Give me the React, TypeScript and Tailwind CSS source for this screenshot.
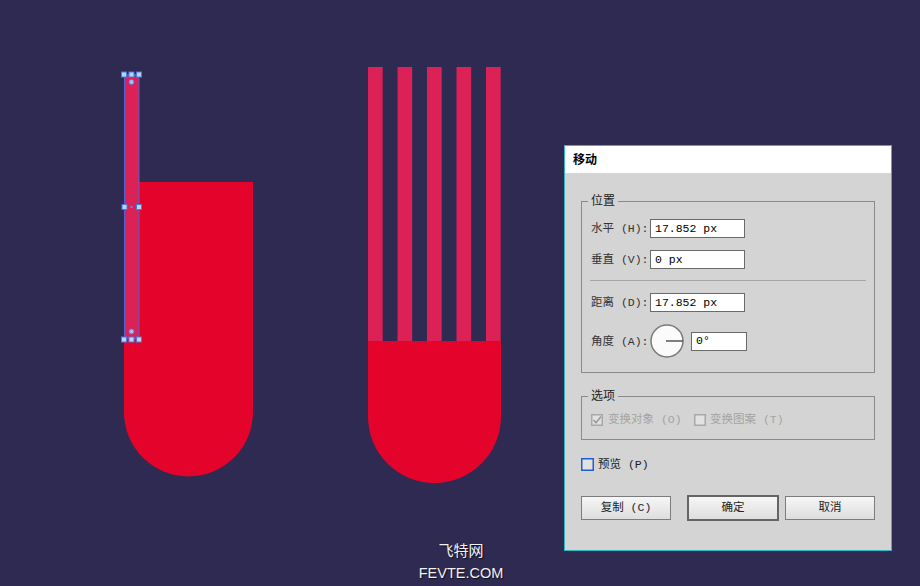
import React from "react";

const uiFont = {
  fontFamily: '"Liberation Serif", "Noto Sans CJK SC", serif',
};
const labelFont = {
  fontFamily: '"Liberation Mono", "Noto Sans CJK SC", monospace',
};
const monoFont = {
  fontFamily: '"Liberation Mono", "Noto Sans CJK SC", monospace',
};

const Artwork = () => {
  const stripes = [368, 397.5, 427, 456.5, 486];
  const handlesX = [124, 131.5, 139];
  return (
    <svg
      className="absolute top-0 left-0"
      width={920}
      height={586}
      viewBox="0 0 920 586"
    >
      {/* left shape */}
      <path d="M124 182 H253 V412 A64.5 64.5 0 0 1 124 412 Z" fill="#e4042b" />
      <rect x={124} y={74} width={15} height={265} fill="#dc2157" />
      <rect
        x={124.5}
        y={74.5}
        width={14.5}
        height={264.5}
        fill="none"
        stroke="#4f63d6"
        strokeWidth={1}
      />
      {[74.5, 339.5].map((y) =>
        handlesX.map((x) => (
          <rect
            key={`${x}-${y}`}
            x={x - 2.5}
            y={y - 2.5}
            width={5}
            height={5}
            fill="#bcd4ff"
            stroke="#4a78e0"
            strokeWidth={1}
          />
        ))
      )}
      {[124.5, 139].map((x) => (
        <rect
          key={x}
          x={x - 2.5}
          y={204.5}
          width={5}
          height={5}
          fill="#bcd4ff"
          stroke="#4a78e0"
          strokeWidth={1}
        />
      ))}
      <circle cx={131.5} cy={207} r={1.2} fill="#5a8ae8" />
      <circle cx={131.5} cy={82} r={2.5} fill="#9cc0ff" stroke="#4a78e0" strokeWidth={0.8} />
      <circle cx={131.5} cy={331.5} r={2.5} fill="#9cc0ff" stroke="#4a78e0" strokeWidth={0.8} />

      {/* right shape */}
      {stripes.map((x) => (
        <rect key={x} x={x} y={67} width={14.7} height={274} fill="#dc2157" />
      ))}
      <path d="M368 341 H501 V416.5 A66.5 66.5 0 0 1 368 416.5 Z" fill="#e4042b" />
    </svg>
  );
};

const Field = ({ value, className = "w-[95px]" }: { value: string; className?: string }) => (
  <div
    className={`${className} h-[19px] bg-white border border-[#6a6a6a] flex items-center pl-[4px] text-[11.5px] text-black`}
    style={monoFont}
  >
    {value}
  </div>
);

const Group = ({ title, children, className = "" }: { title: string; children: React.ReactNode; className?: string }) => (
  <div className={`border border-[#8a8a8a] ${className}`}>
    <div className="-mt-[9px] ml-[6px] px-[3px] w-fit h-[16px] leading-[16px] bg-[#d4d4d4] text-[12px] text-[#222]">
      {title}
    </div>
    {children}
  </div>
);

const Row = ({ label, children, className = "" }: { label: string; children: React.ReactNode; className?: string }) => (
  <div className={`flex items-center pl-[9px] ${className}`}>
    <div className="w-[59px] pt-[1px] text-[11.5px] text-[#333] whitespace-nowrap" style={labelFont}>
      {label}
    </div>
    {children}
  </div>
);

const AngleDial = () => (
  <svg width={34} height={34} viewBox="0 0 34 34">
    <circle cx={17} cy={17} r={16} fill="#fbfbfb" stroke="#7a7a7a" strokeWidth={1.5} />
    <line x1={16} y1={17} x2={33} y2={17} stroke="#555" strokeWidth={1.5} />
  </svg>
);

const Check = ({ checked, color = "#a8a8a8", size = 12 }: { checked?: boolean; color?: string; size?: number }) => (
  <svg width={size} height={size} viewBox={`0 0 ${size} ${size}`}>
    <rect x={0.75} y={0.75} width={size - 1.5} height={size - 1.5} fill="#e2e2e2" stroke={color} strokeWidth={1.5} />
    {checked && <path d="M2.5 6 L5 8.8 L10 2.5" fill="none" stroke="#9a9a9a" strokeWidth={1.6} />}
  </svg>
);

const Button = ({ label, primary }: { label: string; primary?: boolean }) => (
  <div
    className={`flex items-center justify-center text-[11.5px] text-[#222] bg-gradient-to-b from-[#f6f6f6] to-[#dedede] ${
      primary ? "w-[92px] h-[26px] border-2 border-[#646464]" : "w-[90px] h-[24px] border border-[#7c7c7c]"
    }`}
    style={labelFont}
  >
    {label}
  </div>
);

const MoveDialog = () => (
  <div
    className="absolute left-[564px] top-[145px] w-[328px] h-[406px] border border-[#35b6c6] bg-[#d4d4d4] flex flex-col"
    style={uiFont}
  >
    <div className="h-[27px] bg-white flex items-center pl-[8px] text-[12px] font-bold text-black">移动</div>
    <div className="px-[16px] pt-[28px]">
      <Group title="位置" className="pb-[14px]">
        <Row label="水平 (H):" className="mt-[10px]">
          <Field value="17.852 px" />
        </Row>
        <Row label="垂直 (V):" className="mt-[12px]">
          <Field value="0 px" />
        </Row>
        <div className="mt-[11px] mx-[8px] h-px bg-[#a6a6a6]" />
        <Row label="距离 (D):" className="mt-[12px]">
          <Field value="17.852 px" />
        </Row>
        <Row label="角度 (A):" className="mt-[12px]">
          <AngleDial />
          <div className="ml-[7px]">
            <Field value="0°" className="w-[56px]" />
          </div>
        </Row>
      </Group>

      <Group title="选项" className="mt-[23px] pb-[13px]">
        <div className="mt-[10px] pl-[9px] flex items-center text-[11.5px] text-[#a4a4a4]" style={labelFont}>
          <Check checked />
          <span className="ml-[5px] w-[86px] leading-[12px] whitespace-nowrap">变换对象 (O)</span>
          <Check />
          <span className="ml-[4px] leading-[12px] whitespace-nowrap">变换图案 (T)</span>
        </div>
      </Group>

      <div className="mt-[18px] flex items-center text-[11.5px] text-[#222]" style={labelFont}>
        <Check color="#1d5ed6" size={13} />
        <span className="ml-[4px] leading-[13px]">预览 (P)</span>
      </div>

      <div className="mt-[24px] flex items-center">
        <Button label="复制 (C)" />
        <div className="ml-[16px]">
          <Button label="确定" primary />
        </div>
        <div className="ml-[6px]">
          <Button label="取消" />
        </div>
      </div>
    </div>
  </div>
);

export default function App() {
  return (
    <div className="relative w-[920px] h-[586px] bg-[#2e2a52] overflow-hidden">
      <Artwork />
      <MoveDialog />
      <div
        className="absolute left-[400px] top-[541px] w-[122px] flex flex-col items-center text-[#f2f2f2] [text-shadow:1px_1px_1px_rgba(0,0,0,0.7)]"
        style={{ fontFamily: '"Liberation Sans", "Noto Sans CJK SC", sans-serif' }}
      >
        <div className="text-[15px] leading-[20px]">飞特网</div>
        <div className="text-[14.5px] leading-[20px] mt-[2px]">FEVTE.COM</div>
      </div>
    </div>
  );
}
